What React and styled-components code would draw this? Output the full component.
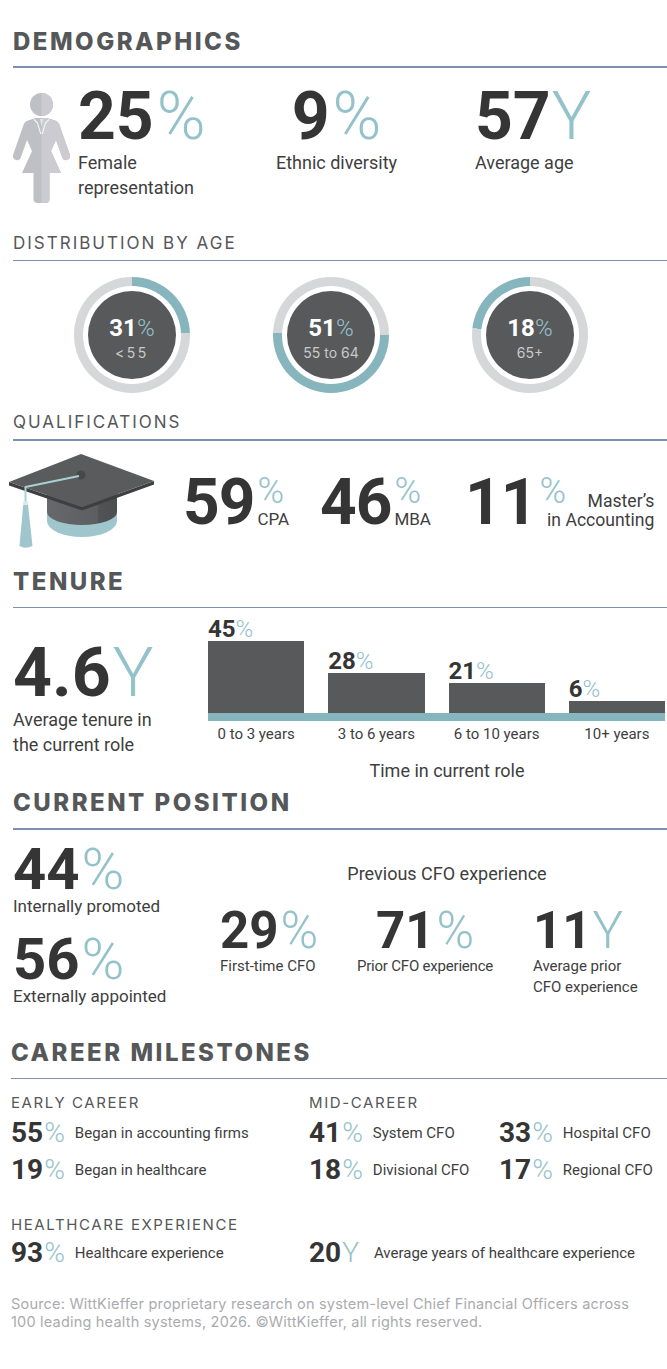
import React from "react";
import styled, { createGlobalStyle } from "styled-components";

const C = {
  dark: "#353535",
  text: "#3e3e3e",
  head: "#555759",
  teal: "#94c2ca",
  tealDeep: "#87b5bd",
  rule: "#7d90b0",
  slate: "#58595b",
  ring: "#d6d7d9",
  muted: "#a9abae",
};

const Global = createGlobalStyle`
  html, body { margin: 0; padding: 0; background: #fff; }
  body {
    width: 667px;
    font-family: Roboto, "Liberation Sans", sans-serif;
    color: ${C.text};
    -webkit-font-smoothing: antialiased;
  }
  * { box-sizing: border-box; }
`;

const Page = styled.main`
  width: 667px;
  padding: 30px 0 37px 13px;
`;

const Heading = styled.h2`
  margin: ${(p) => p.$mt || 0}px 0 0;
  font-family: Inter, "Noto Sans", sans-serif;
  font-weight: 800;
  font-size: 24px;
  line-height: 24px;
  letter-spacing: 2.5px;
  color: ${C.head};
`;

const SubHead = styled.h3`
  margin: ${(p) => p.$mt || 0}px 0 0;
  font-family: Inter, "Noto Sans", sans-serif;
  font-weight: 400;
  font-size: ${(p) => p.$size || 17}px;
  line-height: ${(p) => p.$size || 17}px;
  letter-spacing: ${(p) => p.$ls || 2}px;
  color: ${C.head};
  grid-column: ${(p) => p.$span || "auto"};
`;

const Rule = styled.div`
  height: 1.5px;
  background: ${C.rule};
  margin-top: ${(p) => p.$mt ?? 12}px;
`;

const Figure = styled.div`
  font-family: Roboto, "Liberation Sans", sans-serif;
  font-weight: 700;
  color: ${(p) => p.$color || C.dark};
  font-size: ${(p) => p.$size}px;
  line-height: ${(p) => p.$size}px;
  letter-spacing: ${(p) => p.$ls || 0}px;
  white-space: nowrap;
`;

const Unit = styled.span`
  font-weight: 300;
  color: ${C.teal};
  letter-spacing: 0;
  margin-left: ${(p) => p.$gap || 0}px;
`;

const Label = styled.div`
  font-family: Roboto, "Liberation Sans", sans-serif;
  font-size: ${(p) => p.$size || 18}px;
  line-height: ${(p) => p.$lh || 25}px;
  margin-top: ${(p) => p.$mt || 0}px;
  letter-spacing: ${(p) => p.$ls || 0}px;
  color: ${C.text};
  white-space: nowrap;
`;

/* ---------- Demographics ---------- */
const DemoRow = styled.div`
  display: flex;
  align-items: flex-start;
  margin-top: 16px;
`;

const DemoLead = styled.div`
  display: flex;
  align-items: flex-start;
  gap: 6px;
  width: 262px;
  margin-left: -1px;
`;

const IconSvg = styled.svg`
  display: block;
  flex: none;
  margin-top: ${(p) => p.$mt || 0}px;
  margin-left: ${(p) => p.$ml || 0}px;
`;

const DemoStat = styled.div`
  width: ${(p) => (p.$w ? `${p.$w}px` : "auto")};
  text-align: ${(p) => p.$align || "left"};
  margin-left: ${(p) => p.$ml || 0}px;
`;

/* ---------- Donuts ---------- */
const DonutRow = styled.div`
  display: flex;
  gap: 83px;
  margin: 16px 0 0 61px;
`;

const DonutRing = styled.div`
  width: 116px;
  height: 116px;
  border-radius: 50%;
  background: conic-gradient(${(p) => p.$stops});
  display: flex;
  align-items: center;
  justify-content: center;
`;

const DonutGap = styled.div`
  width: 98px;
  height: 98px;
  border-radius: 50%;
  background: #fff;
  display: flex;
  align-items: center;
  justify-content: center;
`;

const DonutCore = styled.div`
  width: 88px;
  height: 88px;
  border-radius: 50%;
  background: ${C.slate};
  display: flex;
  flex-direction: column;
  align-items: center;
  justify-content: center;
  padding-top: 7px;
`;

const DonutSub = styled.div`
  font-family: Inter, "Noto Sans", sans-serif;
  font-size: 14px;
  line-height: 16px;
  margin-top: 5px;
  color: #c8c9cb;
  letter-spacing: ${(p) => p.$ls || 0}px;
`;

/* ---------- Qualifications ---------- */
const QualRow = styled.div`
  display: grid;
  grid-template-columns: 174px 137px 145px auto;
  align-items: start;
  margin-left: -4px;
`;

const QualItem = styled.div`
  display: flex;
  align-items: flex-start;
  gap: 3px;
  margin-top: 30px;
`;

const QualSide = styled.div`
  display: flex;
  flex-direction: ${(p) => (p.$stack ? "column" : "row")};
  align-items: flex-start;
`;

const QualPct = styled.div`
  font-family: Roboto, "Liberation Sans", sans-serif;
  font-weight: 300;
  font-size: 36px;
  line-height: 20px;
  margin-top: 10px;
  color: ${C.teal};
`;

const QualLabel = styled.div`
  font-family: Roboto, "Liberation Sans", sans-serif;
  font-size: ${(p) => p.$size || 17}px;
  line-height: 19px;
  margin-top: ${(p) => p.$mt}px;
  margin-left: ${(p) => p.$ml || 0}px;
  text-align: ${(p) => p.$align || "left"};
  color: ${C.text};
  white-space: nowrap;
`;

/* ---------- Tenure ---------- */
const TenureRow = styled.div`
  display: flex;
  align-items: flex-start;
`;

const TenureLead = styled.div`
  width: 195px;
  margin-top: 31px;
`;

const Chart = styled.div`
  width: 457px;
  margin-top: 9px;
`;

const ChartCols = styled.div`
  display: grid;
  grid-template-columns: repeat(4, 1fr);
  column-gap: 24px;
  align-items: end;
  height: ${(p) => (p.$h ? `${p.$h}px` : "auto")};
  margin-top: ${(p) => p.$mt || 0}px;
`;

const BarCol = styled.div`
  display: flex;
  flex-direction: column;
`;

const Bar = styled.div`
  background: ${C.slate};
  width: 100%;
`;

const Band = styled.div`
  height: 8px;
  background: ${C.tealDeep};
`;

const XLabel = styled.div`
  font-family: Roboto, "Liberation Sans", sans-serif;
  font-size: 15px;
  line-height: 18px;
  text-align: center;
  color: ${C.text};
  white-space: nowrap;
`;

const ChartTitle = styled.div`
  font-family: Roboto, "Liberation Sans", sans-serif;
  font-size: 18px;
  line-height: 22px;
  text-align: center;
  padding-left: 21px;
  margin-top: 17px;
  color: ${C.text};
`;

/* ---------- Current position ---------- */
const PosGrid = styled.div`
  display: grid;
  grid-template-columns: 207px 1fr;
  align-items: start;
`;

const PosLead = styled.div`
  margin-top: 10px;
`;

const PosSpacer = styled.div`
  height: 16px;
`;

const PosRight = styled.div``;

const PosTitle = styled.div`
  font-family: Roboto, "Liberation Sans", sans-serif;
  font-size: 18px;
  line-height: 22px;
  text-align: center;
  padding-left: 7px;
  margin-top: 33px;
  color: ${C.text};
`;

const PosStats = styled.div`
  display: grid;
  grid-template-columns: 135px 140px 1fr;
  margin-top: 20.5px;
`;

const PosStat = styled.div`
  text-align: ${(p) => p.$align || "left"};
  padding-left: ${(p) => p.$pl || 0}px;
`;

/* ---------- Career ---------- */
const Career = styled.section`
  margin-left: -2px;
`;

const CareerGrid = styled.div`
  display: grid;
  grid-template-columns: ${(p) => p.$cols};
  row-gap: ${(p) => p.$gap}px;
  margin-top: ${(p) => p.$mt}px;
`;

const Mini = styled.div`
  display: flex;
  align-items: center;
  gap: ${(p) => p.$gap || 10}px;
  grid-column: ${(p) => p.$span || "auto"};
`;

const Source = styled.p`
  margin: 28px 0 0;
  font-family: Inter, "Noto Sans", sans-serif;
  font-size: 14.5px;
  line-height: 18px;
  letter-spacing: 0.2px;
  color: ${C.muted};
  white-space: nowrap;
`;

/* ---------- Drawings ---------- */
const womanShape = (
  <>
    <circle cx="29.5" cy="11.5" r="11.5" />
    <path d="M24 25 L16 27.5 Q12.5 28.5 11.5 32 L1.2 61.5 Q0.3 66 4 67 Q7.6 67.8 8.8 64.5 L15 47 L20 58 L10 80 L49 80 L39 58 L44 47 L50.2 64.5 Q51.4 67.8 55 67 Q58.7 66 57.8 61.5 L47.5 32 Q46.5 28.5 43 27.5 L35 25 Z" />
    <path d="M21.5 79 H37.5 V106 Q37.5 110 33.5 110 H25.5 Q21.5 110 21.5 106 Z" />
  </>
);

const WomanIcon = () => (
  <IconSvg width="60" height="112" viewBox="0 0 60 112" $mt={9}>
    <defs>
      <clipPath id="womanRight">
        <rect x="29.5" y="0" width="31" height="112" />
      </clipPath>
    </defs>
    <g fill="#bfbfc6">{womanShape}</g>
    <g fill="#cbcbd1" clipPath="url(#womanRight)">
      {womanShape}
    </g>
    <path d="M22 26.5 L25.5 30 L28.8 41 M37 26.5 L33.5 30 L30.2 41" stroke="#f4f4f6" strokeWidth="1.1" fill="none" strokeLinejoin="round" />
    <path d="M27.8 26 L31.2 26 L29.5 33 Z" fill="#e2e2e6" />
  </IconSvg>
);

const GradCap = () => (
  <IconSvg width="146" height="96" viewBox="0 0 146 96" $mt={13}>
    <defs>
      <linearGradient id="capBody" x1="0" x2="1" y1="0" y2="0">
        <stop offset="0" stopColor="#67686b" />
        <stop offset="0.72" stopColor="#5d5e60" />
        <stop offset="0.73" stopColor="#525355" />
        <stop offset="1" stopColor="#4d4e50" />
      </linearGradient>
    </defs>
    <path d="M38 50 V67 A35 16 0 0 0 108 67 V50 Z" fill="#9ec6cc" />
    <path d="M38 34 V58 A35 13 0 0 0 108 58 V34 Z" fill="url(#capBody)" />
    <path d="M0 28 L73 53 L145 27 L145 30.5 L73 56.5 L0 31.5 Z" fill="#3e3f41" />
    <path d="M0 28 L72 0 L145 27 L73 53 Z" fill="#5a5b5d" />
    <circle cx="72" cy="21" r="4.5" fill="#47484a" />
    <path d="M70 22 L16.5 33 V48" stroke="#a9d0d5" strokeWidth="2" fill="none" strokeLinejoin="round" />
    <rect x="14.2" y="47" width="4.8" height="4" fill="#dbe9eb" />
    <path d="M14.2 51 H19 L23.5 92 Q16.5 95.5 10.5 92 Z" fill="#9ec6cc" />
  </IconSvg>
);

/* ---------- Data ---------- */
const donuts = [
  { v: "31", label: "<55", from: 0, to: 88, ls: 2.5 },
  { v: "51", label: "55 to 64", from: 90, to: 272 },
  { v: "18", label: "65+", from: 277, to: 360 },
];

const ringStops = (from, to) =>
  `${C.ring} 0deg ${from}deg, ${C.tealDeep} ${from}deg ${to}deg, ${C.ring} ${to}deg 360deg`;

const bars = [
  { v: "45", h: 72, label: "0 to 3 years" },
  { v: "28", h: 40, label: "3 to 6 years" },
  { v: "21", h: 30, label: "6 to 10 years" },
  { v: "6", h: 12, label: "10+ years" },
];

const MiniStat = ({ n, u = "%", children, span }) => (
  <Mini $span={span} $gap={u === "Y" ? 15 : 10}>
    <Figure $size={28}>
      {n}
      <Unit $gap={1}>{u}</Unit>
    </Figure>
    <Label $size={15} $lh={18}>
      {children}
    </Label>
  </Mini>
);

export default function App() {
  return (
    <>
      <Global />
      <Page>
        {/* DEMOGRAPHICS */}
        <Heading>DEMOGRAPHICS</Heading>
        <Rule $mt={12} />
        <DemoRow>
          <DemoLead>
            <WomanIcon />
            <DemoStat>
              <Figure $size={66}>
                25<Unit $gap={3}>%</Unit>
              </Figure>
              <Label>
                Female
                <br />
                representation
              </Label>
            </DemoStat>
          </DemoLead>
          <DemoStat $w={125} $align="center">
            <Figure $size={66}>
              9<Unit $gap={3}>%</Unit>
            </Figure>
            <Label>Ethnic diversity</Label>
          </DemoStat>
          <DemoStat $ml={76}>
            <Figure $size={66}>
              57<Unit $gap={1}>Y</Unit>
            </Figure>
            <Label>Average age</Label>
          </DemoStat>
        </DemoRow>

        {/* DISTRIBUTION */}
        <SubHead $mt={30}>DISTRIBUTION BY AGE</SubHead>
        <Rule $mt={8} />
        <DonutRow>
          {donuts.map((d) => (
            <DonutRing key={d.v} $stops={ringStops(d.from, d.to)}>
              <DonutGap>
                <DonutCore>
                  <Figure $size={24} $color="#fff">
                    {d.v}
                    <Unit>%</Unit>
                  </Figure>
                  <DonutSub $ls={d.ls}>{d.label}</DonutSub>
                </DonutCore>
              </DonutGap>
            </DonutRing>
          ))}
        </DonutRow>

        {/* QUALIFICATIONS */}
        <SubHead $mt={21}>QUALIFICATIONS</SubHead>
        <Rule $mt={8} />
        <QualRow>
          <GradCap />
          <QualItem>
            <Figure $size={64} $ls={-1}>59</Figure>
            <QualSide $stack>
              <QualPct>%</QualPct>
              <QualLabel $mt={9}>CPA</QualLabel>
            </QualSide>
          </QualItem>
          <QualItem>
            <Figure $size={64} $ls={-1}>46</Figure>
            <QualSide $stack>
              <QualPct>%</QualPct>
              <QualLabel $mt={9}>MBA</QualLabel>
            </QualSide>
          </QualItem>
          <QualItem>
            <Figure $size={64} $ls={-1}>11</Figure>
            <QualSide>
              <QualPct>%</QualPct>
              <QualLabel $mt={21} $ml={-19} $size={17.6} $align="right">
                Master’s
                <br />
                in Accounting
              </QualLabel>
            </QualSide>
          </QualItem>
        </QualRow>

        {/* TENURE */}
        <Heading $mt={20}>TENURE</Heading>
        <Rule $mt={13} />
        <TenureRow>
          <TenureLead>
            <Figure $size={68}>
              4.6<Unit $gap={2}>Y</Unit>
            </Figure>
            <Label>
              Average tenure in
              <br />
              the current role
            </Label>
          </TenureLead>
          <Chart>
            <ChartCols $h={96}>
              {bars.map((b) => (
                <BarCol key={b.v}>
                  <Figure $size={24}>
                    {b.v}
                    <Unit>%</Unit>
                  </Figure>
                  <Bar style={{ height: `${b.h}px` }} />
                </BarCol>
              ))}
            </ChartCols>
            <Band />
            <ChartCols $mt={4}>
              {bars.map((b) => (
                <XLabel key={b.label}>{b.label}</XLabel>
              ))}
            </ChartCols>
            <ChartTitle>Time in current role</ChartTitle>
          </Chart>
        </TenureRow>

        {/* CURRENT POSITION */}
        <Heading $mt={9}>CURRENT POSITION</Heading>
        <Rule $mt={13} />
        <PosGrid>
          <PosLead>
            <Figure $size={58}>
              44<Unit $gap={2}>%</Unit>
            </Figure>
            <Label $size={17} $lh={16}>
              Internally promoted
            </Label>
            <PosSpacer />
            <Figure $size={58}>
              56<Unit $gap={2}>%</Unit>
            </Figure>
            <Label $size={17} $lh={16}>
              Externally appointed
            </Label>
          </PosLead>
          <PosRight>
            <PosTitle>Previous CFO experience</PosTitle>
            <PosStats>
              <PosStat>
                <Figure $size={51}>
                  29<Unit $gap={2}>%</Unit>
                </Figure>
                <Label $size={15} $lh={20}>
                  First-time CFO
                </Label>
              </PosStat>
              <PosStat $align="center">
                <Figure $size={51}>
                  71<Unit $gap={2}>%</Unit>
                </Figure>
                <Label $size={15} $lh={20} $ls={-0.2}>
                  Prior CFO experience
                </Label>
              </PosStat>
              <PosStat $pl={38}>
                <Figure $size={51}>
                  11<Unit $gap={1}>Y</Unit>
                </Figure>
                <Label $size={15} $lh={21}>
                  Average prior
                  <br />
                  CFO experience
                </Label>
              </PosStat>
            </PosStats>
          </PosRight>
        </PosGrid>

        {/* CAREER MILESTONES */}
        <Career>
          <Heading $mt={37}>CAREER MILESTONES</Heading>
          <Rule $mt={13} />
          <CareerGrid $cols="298px 190px 1fr" $gap={9} $mt={16}>
            <SubHead $size={15} $ls={1.6}>
              EARLY CAREER
            </SubHead>
            <SubHead $size={15} $ls={1.6} $span="span 2">
              MID-CAREER
            </SubHead>
            <MiniStat n="55">Began in accounting firms</MiniStat>
            <MiniStat n="41">System CFO</MiniStat>
            <MiniStat n="33">Hospital CFO</MiniStat>
            <MiniStat n="19">Began in healthcare</MiniStat>
            <MiniStat n="18">Divisional CFO</MiniStat>
            <MiniStat n="17">Regional CFO</MiniStat>
          </CareerGrid>
          <CareerGrid $cols="298px 1fr" $gap={7} $mt={33}>
            <SubHead $size={15} $ls={1.6} $span="span 2">
              HEALTHCARE EXPERIENCE
            </SubHead>
            <MiniStat n="93">Healthcare experience</MiniStat>
            <MiniStat n="20" u="Y">
              Average years of healthcare experience
            </MiniStat>
          </CareerGrid>
          <Source>
            Source: WittKieffer proprietary research on system-level Chief Financial Officers across
            <br />
            100 leading health systems, 2026. ©WittKieffer, all rights reserved.
          </Source>
        </Career>
      </Page>
    </>
  );
}
